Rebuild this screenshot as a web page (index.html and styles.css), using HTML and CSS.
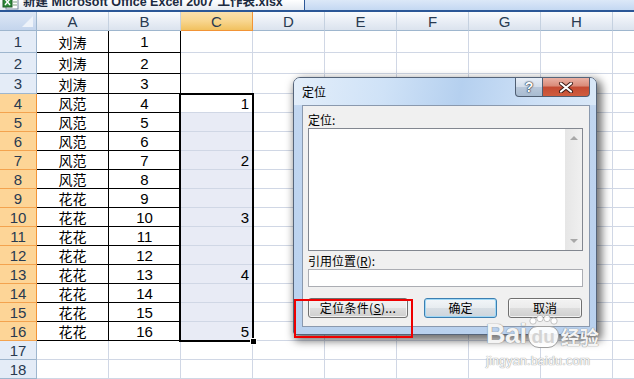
FILE: index.html
```html
<!DOCTYPE html>
<html lang="zh-CN">
<head>
<meta charset="utf-8">
<title>定位</title>
<link rel="stylesheet" href="styles.css">
</head>
<body>
<div class="app">
  <div class="strip">
    <div class="tab">
      <svg class="fileicon" width="18" height="11" viewBox="0 0 18 11"><rect x="4" y="-4" width="12" height="13" fill="#fff" stroke="#7a8aa0"/><rect x="1" y="-3" width="9" height="10" fill="#2f8a3a" stroke="#1e5c26"/><path d="M3 -1 L8 5 M8 -1 L3 5" stroke="#fff" stroke-width="1.4"/><path d="M11 2h4M11 5h4" stroke="#7fa27f"/></svg>
      <span class="tabtext">新建 Microsoft Office Excel 2007 工作表.xlsx</span>
    </div>
    <div class="tabrest"></div>
  </div>

  <div class="sheet">
    <div class="corner"></div><div class="ch">A</div><div class="ch">B</div><div class="ch on">C</div><div class="ch">D</div><div class="ch">E</div><div class="ch">F</div><div class="ch">G</div><div class="ch">H</div><div class="ch"></div>

    <div class="rh">1</div><div class="k cn">刘涛</div><div class="k">1</div><div></div><div></div><div></div><div></div><div></div><div></div><div></div>
    <div class="rh">2</div><div class="k cn">刘涛</div><div class="k">2</div><div></div><div></div><div></div><div></div><div></div><div></div><div></div>
    <div class="rh">3</div><div class="k cn">刘涛</div><div class="k">3</div><div></div><div></div><div></div><div></div><div></div><div></div><div></div>
    <div class="rh on">4</div><div class="k cn">风范</div><div class="k">4</div><div class="num">1</div><div></div><div></div><div></div><div></div><div></div><div></div>
    <div class="rh on">5</div><div class="k cn">风范</div><div class="k">5</div><div class="s"></div><div></div><div></div><div></div><div></div><div></div><div></div>
    <div class="rh on">6</div><div class="k cn">风范</div><div class="k">6</div><div class="s"></div><div></div><div></div><div></div><div></div><div></div><div></div>
    <div class="rh on">7</div><div class="k cn">风范</div><div class="k">7</div><div class="s num">2</div><div></div><div></div><div></div><div></div><div></div><div></div>
    <div class="rh on">8</div><div class="k cn">风范</div><div class="k">8</div><div class="s"></div><div></div><div></div><div></div><div></div><div></div><div></div>
    <div class="rh on">9</div><div class="k cn">花花</div><div class="k">9</div><div class="s"></div><div></div><div></div><div></div><div></div><div></div><div></div>
    <div class="rh on">10</div><div class="k cn">花花</div><div class="k">10</div><div class="s num">3</div><div></div><div></div><div></div><div></div><div></div><div></div>
    <div class="rh on">11</div><div class="k cn">花花</div><div class="k">11</div><div class="s"></div><div></div><div></div><div></div><div></div><div></div><div></div>
    <div class="rh on">12</div><div class="k cn">花花</div><div class="k">12</div><div class="s"></div><div></div><div></div><div></div><div></div><div></div><div></div>
    <div class="rh on">13</div><div class="k cn">花花</div><div class="k">13</div><div class="s num">4</div><div></div><div></div><div></div><div></div><div></div><div></div>
    <div class="rh on">14</div><div class="k cn">花花</div><div class="k">14</div><div class="s"></div><div></div><div></div><div></div><div></div><div></div><div></div>
    <div class="rh on">15</div><div class="k cn">花花</div><div class="k">15</div><div class="s"></div><div></div><div></div><div></div><div></div><div></div><div></div>
    <div class="rh on">16</div><div class="k cn">花花</div><div class="k">16</div><div class="s num">5</div><div></div><div></div><div></div><div></div><div></div><div></div>
    <div class="rh">17</div><div></div><div></div><div></div><div></div><div></div><div></div><div></div><div></div><div></div>
    <div class="rh">18</div><div></div><div></div><div></div><div></div><div></div><div></div><div></div><div></div><div></div>

    <span class="selbox"><span class="handle"></span></span>
  </div>

  <div class="dlg">
    <div class="dtitle">
      <span class="dname">定位</span>
      <div class="capbtns">
        <span class="help">?</span>
        <span class="close"><svg width="16" height="11" viewBox="0 0 16 11"><path d="M3 1.5 L13 9.5 M13 1.5 L3 9.5" stroke="#3b1a14" stroke-width="4" stroke-linecap="round"/><path d="M3 1.5 L13 9.5 M13 1.5 L3 9.5" stroke="#fff" stroke-width="2.2" stroke-linecap="round"/></svg></span>
      </div>
    </div>
    <div class="client">
      <div class="lbl">定位:</div>
      <div class="listbox">
        <div class="vscroll"><span class="up"></span><span class="down"></span></div>
      </div>
      <div class="lbl lbl2">引用位置(<u>R</u>):</div>
      <div class="input"></div>
      <div class="btnrow">
        <span class="btn b1">定位条件(<u>S</u>)...</span>
        <span class="btn b2 def">确定</span>
        <span class="btn b3">取消</span>
      </div>
    </div>
  </div>

  <div class="watermark">
    <div class="wm1">
      <span class="bai">Bai</span>
      <span class="paw"><svg class="toes" width="30" height="10" viewBox="0 0 30 10"><circle cx="5" cy="6" r="3.2"/><circle cx="12" cy="3.5" r="3.2"/><circle cx="19" cy="3.5" r="3.2"/><circle cx="26" cy="6" r="3.2"/></svg><span class="du">du</span></span>
      <span class="jy">经验</span>
    </div>
    <div class="wm2">jingyan.baidu.com</div>
  </div>

  <div class="redbox"></div>
</div>
</body>
</html>
```

FILE: styles.css
```css
html, body {
  margin: 0;
  padding: 0;
}
body {
  width: 634px;
  height: 379px;
  overflow: hidden;
  background: #fff;
  font-family: "Noto Sans CJK SC", sans-serif;
}
.app {
  position: relative;
  width: 634px;
  height: 379px;
  overflow: hidden;
}

/* top title strip */
.strip {
  display: flex;
  height: 12px;
  box-sizing: border-box;
  border-bottom: 2px solid #2b5797;
  overflow: hidden;
}
.tab {
  width: 305px;
  display: flex;
  align-items: flex-start;
  background: linear-gradient(#ffffff, #e6ebf2);
  border-right: 1px solid #2b5797;
  box-sizing: border-box;
  overflow: hidden;
}
.fileicon {
  flex: none;
  margin: 0 3px 0 2px;
}
.tabtext {
  font: bold 12.5px/14px "Liberation Sans", "Noto Sans CJK SC", sans-serif;
  color: #1b2a40;
  white-space: nowrap;
  margin-top: -5px;
}
.tabrest {
  flex: 1;
  background: linear-gradient(#dce8f8, #c4d8f2);
}

/* sheet grid */
.sheet {
  position: relative;
  display: grid;
  width: 635px;
  grid-template-columns: 37px repeat(8, 72px) 22px;
  grid-template-rows: 19px 22px 21px 20px repeat(13, 19px) 19px 19px;
  font: 14px "Liberation Sans", "Noto Sans CJK SC", sans-serif;
  color: #000;
}
.sheet > div {
  box-sizing: border-box;
  border-right: 1px solid #d0d7e5;
  border-bottom: 1px solid #d0d7e5;
  display: flex;
  align-items: center;
  justify-content: center;
  overflow: hidden;
}
.sheet > .corner {
  background: linear-gradient(#dde7f5, #c4d5ed);
  border-right: 1px solid #9eb6ce;
  border-bottom: 1px solid #9eb6ce;
  position: relative;
}
.sheet > .corner::after {
  content: "";
  position: absolute;
  right: 3px;
  bottom: 3px;
  border-left: 11px solid transparent;
  border-bottom: 11px solid #eef3fa;
}
.sheet > .ch {
  background: linear-gradient(#f9fbfd, #e8edf5 55%, #dbe3ee);
  border-right: 1px solid #c5d1e0;
  border-bottom: 1px solid #9eb6ce;
  color: #283a50;
  font-size: 15px;
  padding-top: 1px;
}
.sheet > .ch.on {
  background: linear-gradient(#fbe0ac, #f8d68f 50%, #f1c15f);
  border-right: 1px solid #f29436;
  border-bottom: 1px solid #f29436;
}
.sheet > .rh {
  background: #e4ecf7;
  border-right: 1px solid #9eb6ce;
  border-bottom: 1px solid #9eb6ce;
  color: #283a50;
  font-size: 15px;
}
.sheet > .rh.on {
  background: #fdd597;
  border-right: 1px solid #f29436;
  border-bottom: 1px solid #f3a34f;
}
.sheet > .k {
  border-right: 1px solid #000;
  border-bottom: 1px solid #000;
  font-size: 15px;
}
.sheet > .k.cn {
  font-size: 14px;
  font-family: "Noto Sans CJK SC", sans-serif;
}
.sheet > .s {
  background: #e8ebf5;
}
.sheet > .num {
  justify-content: flex-end;
  padding-right: 3px;
  font-size: 15px;
}
/* selection outline laid over the C4:C16 grid area */
.selbox {
  position: absolute;
  grid-column: 4 / 5;
  grid-row: 5 / 18;
  top: -1px;
  bottom: -1px;
  left: -2px;
  right: -1px;
  border: 2px solid #000;
}
.handle {
  position: absolute;
  right: -5px;
  bottom: -5px;
  width: 5px;
  height: 5px;
  background: #000;
  border: 1px solid #fff;
}

/* dialog */
.dlg {
  position: absolute;
  left: 293px;
  top: 77px;
  width: 304px;
  height: 258px;
  box-sizing: border-box;
  border: 1px solid #56657a;
  border-radius: 7px 7px 3px 3px;
  background: linear-gradient(180deg, #d6e5f6 0%, #c1d6f0 12%, #b9d1ee 100%);
  box-shadow: 3px 4px 9px 2px rgba(0, 0, 0, 0.55);
  display: flex;
  flex-direction: column;
}
.dtitle {
  height: 27px;
  display: flex;
  align-items: flex-start;
  justify-content: space-between;
  background: linear-gradient(100deg, #e3eefa 0%, #cfe2f7 30%, #b5d0ef 55%, #cde0f6 80%, #d9e8f8 100%);
  border-radius: 6px 6px 0 0;
}
.dname {
  font-size: 12px;
  line-height: 14px;
  margin: 7px 0 0 8px;
  color: #000;
}
.capbtns {
  display: flex;
  margin-right: 6px;
}
.capbtns span {
  height: 19px;
  box-sizing: border-box;
  display: flex;
  align-items: center;
  justify-content: center;
  border: 1px solid #4f5e72;
  border-top: none;
}
.help {
  width: 28px;
  border-radius: 0 0 0 4px;
  background: linear-gradient(#e7eef7 0%, #d2ddea 50%, #b9c8da 50%, #a8bbd1 100%);
  font: bold 14px/1 "Liberation Sans", sans-serif;
  color: #fff;
  text-shadow: 0 0 1px #263445, 0 0 1px #263445, 0 0 2px #263445;
}
.capbtns .close {
  width: 47px;
  border-left: none;
  border-radius: 0 0 4px 0;
  background: linear-gradient(#eab1a4 0%, #d98a78 45%, #c44a32 50%, #cf5d3f 100%);
}

.client {
  margin: 0 6px 7px 8px;
  flex: 1;
  box-sizing: border-box;
  border: 1px solid #8a99ae;
  background: #f0f0f0;
  padding: 5px 6px 0 5px;
  display: flex;
  flex-direction: column;
}
.lbl {
  font-size: 12px;
  line-height: 17px;
  color: #000;
}
.lbl2 {
  margin-top: 1px;
}
.lbl u, .btn u {
  text-decoration: underline;
}
.listbox {
  height: 123px;
  box-sizing: border-box;
  border: 1px solid #828790;
  background: #fff;
  display: flex;
  justify-content: flex-end;
}
.vscroll {
  width: 17px;
  background: linear-gradient(90deg, #e6e6e6, #f0f0f0);
  position: relative;
}
.vscroll span {
  position: absolute;
  left: 5px;
  width: 0;
  height: 0;
  border-left: 4px solid transparent;
  border-right: 4px solid transparent;
}
.vscroll .up {
  top: 7px;
  border-bottom: 4px solid #a8a8a8;
}
.vscroll .down {
  bottom: 7px;
  border-top: 4px solid #a8a8a8;
}
.input {
  height: 18px;
  box-sizing: border-box;
  border: 1px solid #abadb3;
  background: #fff;
}
.btnrow {
  display: flex;
  margin-top: 11px;
}
.btn {
  height: 20px;
  box-sizing: border-box;
  border: 1px solid #707070;
  border-radius: 3px;
  background: linear-gradient(#f3f3f3 0%, #ebebeb 50%, #dddddd 50%, #cfcfcf 100%);
  box-shadow: inset 0 0 0 1px rgba(255, 255, 255, 0.7);
  font-size: 12px;
  line-height: 18px;
  text-align: center;
  color: #000;
}
.b1 {
  width: 100px;
  letter-spacing: 0.3px;
}
.b2 {
  width: 73px;
  margin-left: 16px;
}
.b3 {
  width: 74px;
  margin-left: 11px;
}
.btn.def {
  border-color: #3c7fb1;
  box-shadow: inset 0 0 0 1px #9fd8f6;
  background: linear-gradient(#f2f6f9 0%, #e7ecf0 50%, #d8dfe5 50%, #cdd5dc 100%);
}

/* watermark */
.watermark {
  position: absolute;
  left: 486px;
  top: 316px;
  width: 116px;
  pointer-events: none;
}
.wm1 {
  display: flex;
  align-items: flex-end;
  height: 32px;
}
.bai {
  font: bold 27px/27px "Liberation Sans", sans-serif;
  color: rgba(255, 255, 255, 0.92);
  text-shadow: 0 0 1px #8a8a8a, 0 0 1px #8a8a8a;
  letter-spacing: -0.5px;
}
.paw {
  position: relative;
  display: inline-block;
  margin-left: 1px;
}
.toes {
  position: absolute;
  left: 0;
  top: -9px;
  fill: rgba(255, 255, 255, 0.9);
  stroke: #a0a0a0;
  stroke-width: 0.6;
}
.du {
  display: inline-block;
  font: bold 19px/20px "Liberation Sans", sans-serif;
  color: #d4d4d4;
  background: rgba(255, 255, 255, 0.92);
  border: 1px solid #a0a0a0;
  border-radius: 9px 9px 11px 11px;
  padding: 0 3px;
}
.jy {
  margin-left: 2px;
  font: bold 19px/22px "Noto Sans CJK SC", sans-serif;
  color: rgba(255, 255, 255, 0.92);
  text-shadow: 0 0 1px #8a8a8a, 0 0 1px #8a8a8a;
}
.wm2 {
  margin-top: 7px;
  font: 12.5px/12px "Liberation Sans", sans-serif;
  color: rgba(255, 255, 255, 0.95);
  text-shadow: 0 0 1px #9a9a9a, 0 0 1px #9a9a9a;
  letter-spacing: 0.2px;
  white-space: nowrap;
}

.redbox {
  position: absolute;
  left: 294px;
  top: 299px;
  width: 119px;
  height: 39px;
  box-sizing: border-box;
  border: 2px solid #ee0000;
}
```
